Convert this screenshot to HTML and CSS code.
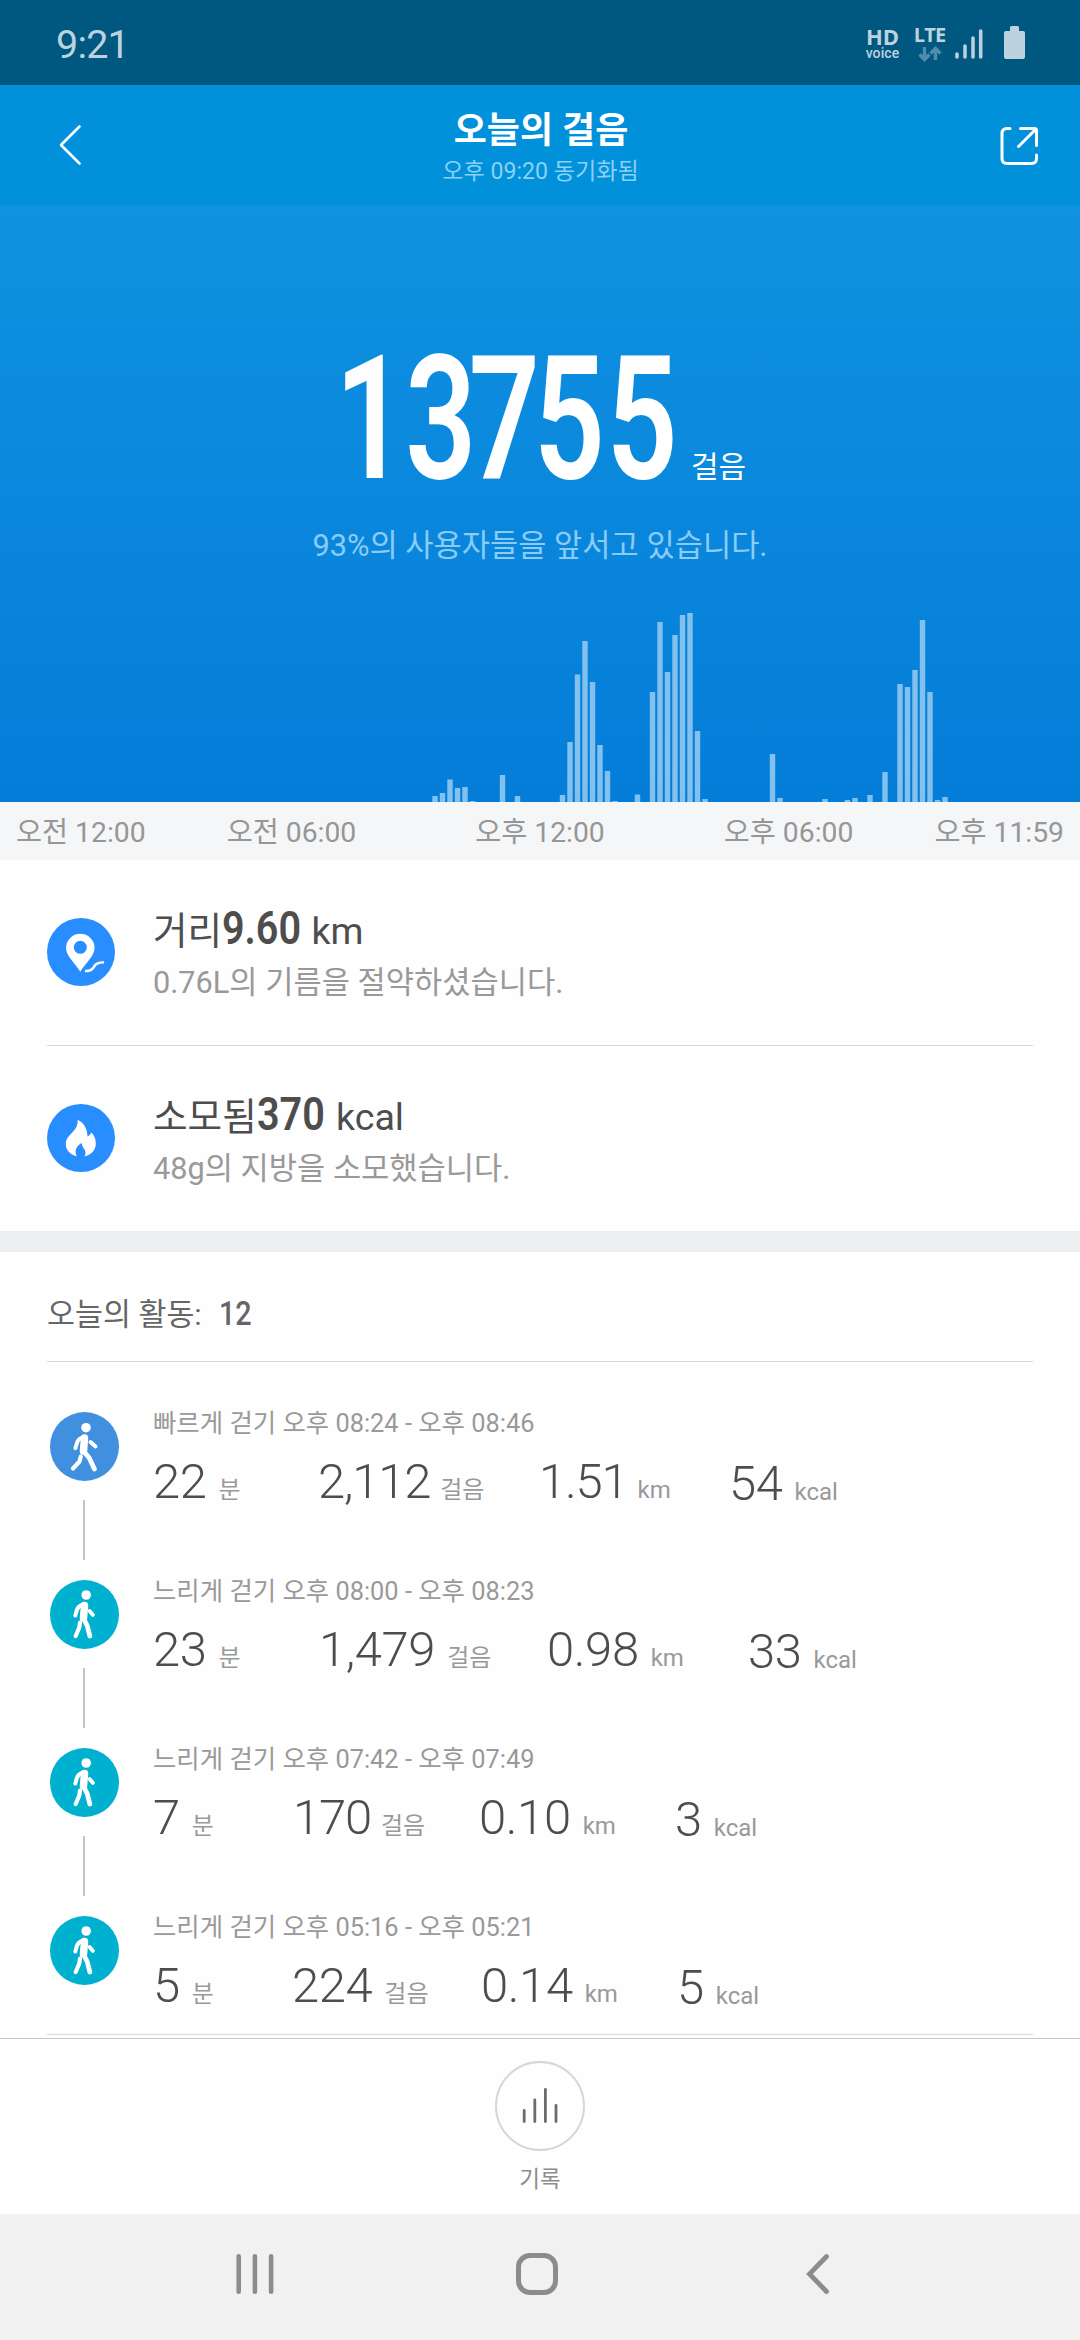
FILE: index.html
```html
<!DOCTYPE html>
<html lang="ko">
<head>
    <meta charset="UTF-8">
    <meta name="viewport" content="width=device-width, initial-scale=1.0">
    <title>오늘의 걸음</title>
    <link rel="stylesheet" href="styles.css">
</head>
<body>
    <!-- shared walking icons -->
    <svg class="defs" width="0" height="0" aria-hidden="true">
        <symbol id="walk-fast" viewBox="0 0 69 69">
            <circle cx="36" cy="15.7" r="4.8" fill="#fff"/>
            <g fill="none" stroke="#fff" stroke-linecap="round" stroke-linejoin="round">
                <path d="M34.5 26 L33.5 39" stroke-width="7.5"/>
                <path d="M34 24.8 Q28.5 26.5 27.3 30 L25.4 36.2" stroke-width="4"/>
                <path d="M40.5 30 L45.5 34.5" stroke-width="4"/>
                <path d="M33.5 39 L39.3 46 L44.4 57" stroke-width="4.8"/>
                <path d="M30.8 44.5 L29.5 49.5 L23 56.5" stroke-width="4.2"/>
            </g>
        </symbol>
        <symbol id="walk-slow" viewBox="0 0 69 69">
            <circle cx="36.2" cy="15" r="4.8" fill="#fff"/>
            <g fill="none" stroke="#fff" stroke-linecap="round" stroke-linejoin="round">
                <path d="M34.5 25.5 L33.5 38" stroke-width="7.5"/>
                <path d="M33 24.3 Q28.3 26 27 29.5 L25.3 35.5" stroke-width="4"/>
                <path d="M39.5 31 L42.8 34.8" stroke-width="4"/>
                <path d="M33.5 38 L37.5 46.5 L39.8 56" stroke-width="4.8"/>
                <path d="M30 42.5 L29.3 47.5 L25.7 56" stroke-width="4.2"/>
            </g>
        </symbol>
    </svg>

    <div class="screen">
        <div class="status-bar">
            <span class="clock">9:21</span>
            <div class="status-icons">
                <div class="hd"><b>HD</b><span>voice</span></div>
                <div class="lte">
                    <b>LTE</b>
                    <svg width="24" height="16" viewBox="0 0 24 16">
                        <path d="M6.5 1v12M1.5 8.5l5 5 5-5M17.5 14V3M12.5 7.5l5-5 5 5" fill="none" stroke="#4f8dab" stroke-width="3.4"/>
                    </svg>
                </div>
                <svg class="signal" width="28" height="32" viewBox="0 0 28 32">
                    <path d="M2 26v3M10 18v11M18 10v19M25.7 3v26" fill="none" stroke="#bcd3df" stroke-width="3.5" stroke-linecap="round"/>
                </svg>
                <svg class="battery" width="21" height="33" viewBox="0 0 21 33">
                    <path d="M6 1.5Q6 0 7.5 0h6Q15 0 15 1.5V5h4q2 0 2 2v24q0 2-2 2H2q-2 0-2-2V7q0-2 2-2h4z" fill="#bcd3df"/>
                </svg>
            </div>
        </div>

        <header class="app-bar">
            <svg class="back" width="24" height="42" viewBox="0 0 24 42">
                <path d="M21.5 2.500L3 21l18.500 18.500" fill="none" stroke="#fff" stroke-width="2.6" stroke-linecap="round" stroke-linejoin="round"/>
            </svg>
            <div class="titles">
                <h1>오늘의 걸음</h1>
                <p>오후 09:20 동기화됨</p>
            </div>
            <svg class="share" width="38" height="38" viewBox="0 0 38 38">
                <g fill="none" stroke="#fff" stroke-width="3" stroke-linecap="round" stroke-linejoin="round">
                    <path d="M10 1.5H7Q2 1.5 2 6.500v25q0 5 5 5h24.500q5 0 5-5V28"/>
                    <path d="M20.500 1.5h14q2 0 2 2V18.500M35.500 2.500L18.500 19.500"/>
                </g>
            </svg>
        </header>

        <section class="hero">
            <div class="steps">
                <svg class="steps-value" width="336" height="130">
                    <text transform="scale(.72 1)" x="-7 90.500 179 269 370" y="128">13755</text>
                </svg>
                <span class="steps-unit">걸음</span>
            </div>
            <p class="rank">93%의 사용자들을 앞서고 있습니다.</p>
            <!-- one column per 10 minutes, 7.5px apart -->
            <svg class="chart" width="1080" height="200" viewBox="0 0 1080 200">
                <path d="M435 200v-6M442.5 200v-9M450 200v-22.5M457.5 200v-14M465 200v-15M472.5 200v-1M502.5 200v-27M517.5 200v-6
                    M562.5 200v-7M570 200v-60M577.5 200v-127.5M585 200v-161M592.5 200v-120M600 200v-57M607.5 200v-31M615 200v-1
                    M637.5 200v-7.5M652.5 200v-110M660 200v-180M667.5 200v-130M675 200v-167M682.5 200v-187M690 200v-189M697.5 200v-71M705 200v-3
                    M772.5 200v-48M780 200v-4M825 200v-3M847.5 200v-2M855 200v-4M870 200v-7M885 200v-30
                    M900 200v-118M907.5 200v-115M915 200v-132M922.5 200v-182M930 200v-110M937.5 200v-2M945 200v-5"/>
            </svg>
        </section>

        <div class="axis">
            <span>오전 12:00</span>
            <div class="axis-mid">
                <span>오전 06:00</span>
                <span>오후 12:00</span>
                <span>오후 06:00</span>
            </div>
            <span>오후 11:59</span>
        </div>

        <section class="metrics">
            <div class="metric">
                <svg width="68" height="68" viewBox="0 0 68 68">
                    <circle cx="34" cy="34" r="34" fill="#288eff"/>
                    <path d="M33.3 53.7C28 45 19 38 19 30a14.3 14.3 0 0 1 28.6 0C47.6 38 38.5 45 33.3 53.7z" fill="#fff"/>
                    <circle cx="33.3" cy="29.3" r="6.5" fill="#288eff"/>
                    <path d="M38 53Q44 53.5 46.5 49.5T51 45.3Q54 44 57 44.5" fill="none" stroke="#fff" stroke-width="2.4"/>
                </svg>
                <div class="metric-text">
                    <h2>거리<b class="w-960">9.60</b> km</h2>
                    <p>0.76L의 기름을 절약하셨습니다.</p>
                </div>
            </div>
            <div class="metric">
                <svg width="68" height="68" viewBox="0 0 68 68">
                    <circle cx="34" cy="34" r="34" fill="#288eff"/>
                    <path d="M30.6 16C37 18.5 40.5 25 40.5 32.5Q43 31.5 44.5 28.5Q48.8 33 48.8 40C48.8 46 44 51 37.5 52.3Q39.5 48.5 37.5 45.5Q35 42.5 34.5 39Q29 42.5 28.6 47Q28.5 50 29.7 52.3C23 50.5 18.8 46 18.8 40C18.8 30 31.5 28 30.6 16z" fill="#fff"/>
                </svg>
                <div class="metric-text">
                    <h2>소모됨<b class="w-370">370</b> kcal</h2>
                    <p>48g의 지방을 소모했습니다.</p>
                </div>
            </div>
        </section>

        <section class="activities">
            <h3>오늘의 활동: <b>12</b></h3>
            <ul>
                <li>
                    <div class="marker fast"><svg><use href="#walk-fast"/></svg></div>
                    <div class="activity">
                        <p>빠르게 걷기 오후 08:24 - 오후 08:46</p>
                        <div class="stats cols-a">
                            <span><b>22</b>분</span><span class="tight"><b>2,112</b>걸음</span><span class="tight"><b>1.51</b>km</span><span><b>54</b>kcal</span>
                        </div>
                    </div>
                </li>
                <li>
                    <div class="marker"><svg><use href="#walk-slow"/></svg></div>
                    <div class="activity">
                        <p>느리게 걷기 오후 08:00 - 오후 08:23</p>
                        <div class="stats cols-b">
                            <span><b>23</b>분</span><span><b>1,479</b>걸음</span><span><b>0.98</b>km</span><span><b>33</b>kcal</span>
                        </div>
                    </div>
                </li>
                <li>
                    <div class="marker"><svg><use href="#walk-slow"/></svg></div>
                    <div class="activity">
                        <p>느리게 걷기 오후 07:42 - 오후 07:49</p>
                        <div class="stats cols-c">
                            <span><b>7</b>분</span><span class="tight"><b>170</b>걸음</span><span><b>0.10</b>km</span><span><b>3</b>kcal</span>
                        </div>
                    </div>
                </li>
                <li>
                    <div class="marker"><svg><use href="#walk-slow"/></svg></div>
                    <div class="activity">
                        <p>느리게 걷기 오후 05:16 - 오후 05:21</p>
                        <div class="stats cols-d">
                            <span><b>5</b>분</span><span><b>224</b>걸음</span><span><b>0.14</b>km</span><span><b>5</b>kcal</span>
                        </div>
                    </div>
                </li>
            </ul>
        </section>

        <footer class="bottom-bar">
            <div class="history">
                <svg width="36" height="38" viewBox="0 0 36 38">
                    <path d="M2.2 23.5v11M12.8 13v21.5M23.4 2.5v32M34 18.5v16" fill="none" stroke="#6c6c6c" stroke-width="2.8" stroke-linecap="round"/>
                </svg>
            </div>
            <span>기록</span>
        </footer>

        <nav class="nav-bar">
            <svg width="38" height="42" viewBox="0 0 38 42">
                <path d="M2.7 3.2v35.6M18.9 3.2v35.6M35.1 3.2v35.6" fill="none" stroke="#8c8c8c" stroke-width="4.6" stroke-linecap="round"/>
            </svg>
            <svg class="home" width="42" height="42" viewBox="0 0 42 42">
                <rect x="2.5" y="2.5" width="37" height="37" rx="11.5" fill="none" stroke="#8c8c8c" stroke-width="5"/>
            </svg>
            <svg width="24" height="42" viewBox="0 0 24 42">
                <path d="M20.5 3.5L3.5 21l17 17.5" fill="none" stroke="#8c8c8c" stroke-width="4.8" stroke-linecap="round"/>
            </svg>
        </nav>
    </div>
</body>
</html>
```

FILE: styles.css
```css
* {
    margin: 0;
    padding: 0;
    box-sizing: border-box;
}

body {
    font-family: Roboto, "Noto Sans CJK KR", sans-serif;
    background: #fefefe;
    color: #4d4d4d;
}

svg {
    display: block;
    flex-shrink: 0;
    overflow: visible;
}

.defs {
    position: absolute;
}

.screen {
    width: 1080px;
    height: 2340px;
    overflow: hidden;
    display: flex;
    flex-direction: column;
}

.screen > * {
    flex-shrink: 0;
}

/* status bar */
.status-bar {
    height: 85px;
    background: #005881;
    color: #bcd3df;
    display: flex;
    justify-content: space-between;
    padding: 0 55px 0 56px;
}

.clock {
    font-size: 39.5px;
    line-height: 90px;
    letter-spacing: -0.8px;
}

.status-icons {
    display: flex;
    align-items: flex-start;
}

.hd,
.lte {
    display: flex;
    flex-direction: column;
    align-items: center;
}

.hd {
    width: 33px;
    margin: 25px 15px 0 0;
}

.hd b {
    font-family: "Open Sans", sans-serif;
    font-size: 22px;
    line-height: 22px;
    font-weight: 700;
}

.hd span {
    font-size: 14px;
    line-height: 12px;
    letter-spacing: 0.1px;
    font-weight: 500;
}

.lte {
    width: 31px;
    margin: 25px 10px 0 0;
}

.lte b {
    font-family: "Open Sans", sans-serif;
    font-size: 20px;
    line-height: 20px;
    font-weight: 700;
    letter-spacing: -0.8px;
}

.lte svg {
    margin-top: 1px;
}

.signal {
    margin-top: 28px;
    margin-right: 21px;
}

.battery {
    margin-top: 26px;
}

/* app bar */
.app-bar {
    height: 121px;
    background: #0091da;
    color: #fff;
    display: flex;
    justify-content: space-between;
    align-items: flex-start;
    padding: 0 42px 0 58px;
}

.back {
    margin-top: 39px;
}

.share {
    margin-top: 42px;
}

.titles {
    text-align: center;
    padding-top: 24px;
}

.titles h1 {
    font-size: 36px;
    font-weight: 600;
    line-height: 44px;
}

.titles p {
    font-size: 23.1px;
    line-height: 38px;
    margin-right: 1px;
    color: #8bd0f5;
}

/* step count */
.hero {
    height: 596px;
    padding-top: 144px;
    background: linear-gradient(#1092e1, #047dd8);
    display: flex;
    flex-direction: column;
}

.steps {
    display: flex;
    align-items: flex-end;
    gap: 15px;
    padding-left: 340px;
    color: #fff;
}

.steps-value text {
    font-size: 173px;
    font-weight: 600;
    fill: #fff;
}

.steps-unit {
    font-size: 30px;
    line-height: 40px;
    margin-bottom: -7px;
}

.rank {
    margin-top: 46px;
    text-align: center;
    font-size: 30.7px;
    line-height: 40px;
    color: #8accf6;
}

.chart {
    margin-top: auto;
}

.chart path {
    stroke: #82c0ee;
    stroke-width: 5.4;
}

.axis {
    height: 58px;
    padding: 2px 16px 0;
    background: #f5f6f8;
    color: #969696;
    font-size: 28.3px;
    line-height: 57px;
    display: flex;
    justify-content: space-between;
}

.axis-mid {
    display: flex;
    gap: 119px;
}

/* distance and calories */
.metrics {
    padding: 0 47px;
    border-bottom: 21px solid #edeef0;
}

.metric {
    display: flex;
    gap: 38px;
    height: 185px;
    padding-top: 58px;
}

.metric + .metric {
    height: 186px;
    border-top: 1px solid #d8d8d8;
}

.metric-text {
    margin-top: -15px;
}

.metric h2 {
    font-size: 37.6px;
    line-height: 50px;
    font-weight: 400;
    white-space: nowrap;
}

.metric b {
    display: inline-block;
    font-size: 46px;
    line-height: 50px;
    font-weight: 600;
    transform: scaleX(0.86);
    transform-origin: left;
}

.w-960 {
    width: 80px;
}

.w-370 {
    width: 70px;
}

.metric p {
    font-size: 30.7px;
    line-height: 50px;
    margin-top: 2px;
    color: #999;
}

/* activity list */
.activities h3 {
    margin: 0 47px;
    padding-top: 16px;
    height: 110px;
    border-bottom: 1px solid #d8d8d8;
    font-size: 30.4px;
    line-height: 91px;
    font-weight: 400;
    color: #666;
}

.activities h3 b {
    display: inline-block;
    margin-left: 10px;
    font-size: 33px;
    font-weight: 500;
    transform: scaleX(0.87);
    transform-origin: left;
}

.activities ul {
    list-style: none;
    height: 673px;
    margin: 0 47px;
    padding: 50px 0 0 3px;
    border-bottom: 1px solid #d8d8d8;
}

.activities li {
    display: flex;
    gap: 34px;
    height: 168px;
}

.marker {
    width: 69px;
}

.marker svg {
    width: 69px;
    height: 69px;
    border-radius: 50%;
    background: #00b0cf;
}

.marker.fast svg {
    background: #4090df;
}

.activities li:not(:last-child) .marker::after {
    content: "";
    display: block;
    width: 2px;
    height: 60px;
    margin: 19px 0 0 33px;
    background: #c4c4c4;
}

.activity p {
    margin-top: -4px;
    font-size: 25.4px;
    line-height: 30px;
    color: #999;
}

.stats {
    display: grid;
    margin-top: 14px;
    color: #999;
    font-size: 24px;
    line-height: 60px;
}

.cols-a {
    grid-template-columns: 165px 221px 190px 140px;
}

.cols-b {
    grid-template-columns: 166px 228px 201px 140px;
}

.cols-c {
    grid-template-columns: 140px 186px 196px 140px;
}

.cols-d {
    grid-template-columns: 139px 189px 196px 140px;
}

.stats span {
    white-space: nowrap;
}

.stats span:last-child {
    padding-top: 2px;
}

.stats b {
    margin-right: 12px;
    font-size: 49px;
    font-weight: 350;
    letter-spacing: -0.4px;
    color: #4d4d4d;
}

.stats .tight b {
    margin-right: 10px;
    letter-spacing: -1.2px;
}

/* bottom bar */
.bottom-bar {
    height: 176px;
    margin-top: 3px;
    padding-top: 22px;
    border-top: 1px solid #c8c8c8;
    display: flex;
    flex-direction: column;
    align-items: center;
    font-size: 22.5px;
    line-height: 30px;
    color: #8c8c8c;
}

.history {
    width: 90px;
    height: 90px;
    margin-bottom: 13px;
    border: 2px solid #d6d6d6;
    border-radius: 50%;
    display: flex;
    align-items: center;
    justify-content: center;
}

.nav-bar {
    height: 126px;
    padding: 39px 250px 0 236px;
    background: #f1f1f1;
    display: flex;
    justify-content: space-between;
}

.home {
    margin-right: 7px;
}
```
